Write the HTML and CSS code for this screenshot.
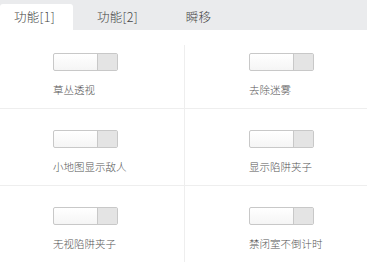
FILE: index.html
```html
<!DOCTYPE html>
<html lang="zh">
<head>
    <meta charset="UTF-8">
    <title>功能</title>
    <link rel="stylesheet" href="styles.css">
</head>
<body>
    <div class="tabs">
        <div class="tab tab-active">功能[1]</div>
        <div class="tab">功能[2]</div>
        <div class="tab">瞬移</div>
    </div>
    <div class="panel">
        <div class="grid">
            <div class="cell cell-first">
                <div class="switch"><span class="switch-knob"></span></div>
                <div class="cell-label">草丛透视</div>
            </div>
            <div class="cell cell-first cell-right">
                <div class="switch"><span class="switch-knob"></span></div>
                <div class="cell-label">去除迷雾</div>
            </div>
            <div class="cell">
                <div class="switch"><span class="switch-knob"></span></div>
                <div class="cell-label">小地图显示敌人</div>
            </div>
            <div class="cell cell-right">
                <div class="switch"><span class="switch-knob"></span></div>
                <div class="cell-label">显示陷阱夹子</div>
            </div>
            <div class="cell">
                <div class="switch"><span class="switch-knob"></span></div>
                <div class="cell-label">无视陷阱夹子</div>
            </div>
            <div class="cell cell-right">
                <div class="switch"><span class="switch-knob"></span></div>
                <div class="cell-label">禁闭室不倒计时</div>
            </div>
        </div>
    </div>
</body>
</html>
```

FILE: styles.css
```css
body{
    margin: 0;
    background: #fff;
    font-family: "Noto Sans CJK SC", "Noto Sans", sans-serif;
    overflow: hidden;
}

.tabs{
    display: flex;
    gap: 8px;
    height: 30px;
    padding-top: 4px;
    box-sizing: border-box;
    background: #eaebed;
}
.tab{
    width: 73px;
    height: 26px;
    line-height: 26px;
    text-align: center;
    font-size: 12.5px;
    font-weight: 300;
    color: #444;
    letter-spacing: 0.3px;
}
.tab-active{
    background: #fff;
    border-radius: 3px 3px 0 0;
    text-indent: -4px;
}

.panel{
    padding-top: 15px;
}
.grid{
    display: grid;
    grid-template-columns: 185px 1fr;
}
.cell{
    height: 77px;
    box-sizing: border-box;
    padding: 21px 0 0 53px;
    border-top: 1px solid #eeeeee;
    border-right: 1px solid #eeeeee;
}
.cell-first{
    height: 63px;
    padding-top: 8px;
    border-top: none;
}
.cell-right{
    border-right: none;
    padding-left: 64px;
}

.switch{
    display: flex;
    justify-content: flex-end;
    width: 65px;
    height: 18px;
    box-sizing: border-box;
    border: 1px solid #c8c8c8;
    border-radius: 2px;
    background: linear-gradient(#ffffff, #f5f5f5);
}
.switch-knob{
    width: 19px;
    height: 100%;
    border-left: 1px solid #c8c8c8;
    background: #e4e4e4;
}

.cell-label{
    margin-top: 12px;
    font-size: 10.5px;
    font-weight: 300;
    line-height: 14px;
    color: #555;
}
```
